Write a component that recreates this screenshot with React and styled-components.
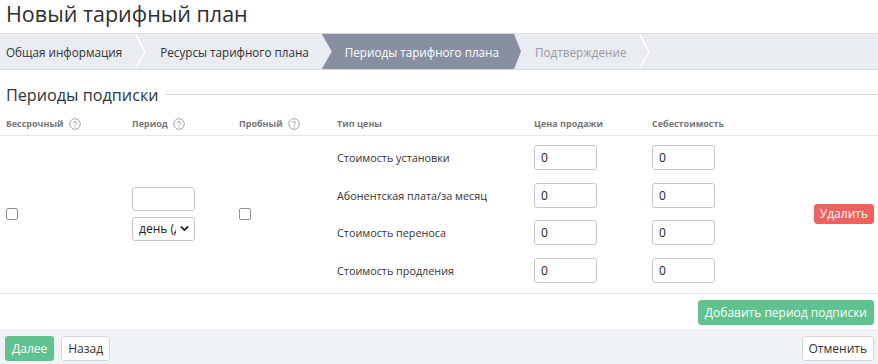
import React from 'react'
import styled, { createGlobalStyle } from 'styled-components'
import { ChevronDown } from 'lucide-react'

const GlobalStyle = createGlobalStyle`
  body {
    margin: 0;
    background: #fff;
    font-family: "Open Sans", "Liberation Sans", sans-serif;
    color: #333;
  }
`

const steps = [
  { title: 'Общая информация' },
  { title: 'Ресурсы тарифного плана' },
  { title: 'Периоды тарифного плана', active: true },
  { title: 'Подтверждение', disabled: true },
]

const prices = [
  'Стоимость установки',
  'Абонентская плата/за месяц',
  'Стоимость переноса',
  'Стоимость продления',
]

const HelpIcon = () => (
  <svg width="12" height="12" viewBox="0 0 12 12" fill="none" stroke="#a0a4aa" strokeWidth="1">
    <circle cx="6" cy="6" r="5.3" />
    <path d="M4.4 4.6a1.6 1.6 0 0 1 3.1.4c0 1.1-1.5 1.3-1.5 2.2" strokeLinecap="round" />
    <circle cx="6" cy="8.9" r="0.55" fill="#a0a4aa" stroke="none" />
  </svg>
)

const Separator = () => (
  <SepSvg width="11" height="35" viewBox="0 0 11 35">
    <polyline points="0.5,0 10,17.5 0.5,35" fill="none" stroke="#fff" strokeWidth="1.5" />
  </SepSvg>
)

const App = () => {
  return (
    <Page>
      <GlobalStyle />
      <Title>Новый тарифный план</Title>
      <Steps>
        {steps.map((s, i) => (
          <React.Fragment key={s.title}>
            <Step $active={s.active} $disabled={s.disabled} $first={i === 0}>{s.title}</Step>
            {!s.active && !(steps[i + 1] && steps[i + 1].active) && <Separator />}
          </React.Fragment>
        ))}
      </Steps>

      <Legend>
        <span>Периоды подписки</span>
        <LegendLine />
      </Legend>

      <HeadRow>
        <HeadCell>Бессрочный <HelpIcon /></HeadCell>
        <HeadCell>Период <HelpIcon /></HeadCell>
        <HeadCell>Пробный <HelpIcon /></HeadCell>
        <HeadCell>Тип цены</HeadCell>
        <HeadCell>Цена продажи</HeadCell>
        <HeadCell>Себестоимость</HeadCell>
        <HeadCell />
      </HeadRow>

      <Body>
        <SpanCell $col={1}>
          <Check type="checkbox" />
        </SpanCell>
        <SpanCell $col={2}>
          <PeriodBox>
            <Field $w={63} $h={24} />
            <SelectWrap>
              <Select defaultValue="day">
                <option value="day">день (дней)</option>
                <option value="month">месяц (месяцев)</option>
              </Select>
              <SelectArrow size={13} strokeWidth={3.2} />
            </SelectWrap>
          </PeriodBox>
        </SpanCell>
        <SpanCell $col={3}>
          <Check type="checkbox" />
        </SpanCell>
        {prices.map((p) => (
          <React.Fragment key={p}>
            <PriceLabel>{p}</PriceLabel>
            <InputCell><Field $w={63} $h={25} defaultValue="0" /></InputCell>
            <InputCell><Field $w={63} $h={25} defaultValue="0" /></InputCell>
          </React.Fragment>
        ))}
        <SpanCell $col={7} $right>
          <DangerButton>Удалить</DangerButton>
        </SpanCell>
      </Body>

      <AddRow>
        <Button $kind="green">Добавить период подписки</Button>
      </AddRow>

      <Footer>
        <Group>
          <Button $kind="green">Далее</Button>
          <Button>Назад</Button>
        </Group>
        <Button>Отменить</Button>
      </Footer>
    </Page>
  )
}

const Page = styled.div`
  width: 878px;
  height: 364px;
  overflow: hidden;
`

const Title = styled.h1`
  margin: 0;
  padding: 0 6px;
  height: 33px;
  font-size: 21.5px;
  font-weight: 400;
  line-height: 28px;
  color: #2e2e2e;
`

const Steps = styled.div`
  display: flex;
  align-items: stretch;
  height: 35px;
  background: #e9ecf0;
  border-top: 1px solid #d9dde3;
  border-bottom: 1px solid #d9dde3;
`

const Step = styled.div`
  display: flex;
  align-items: center;
  font-size: 11.7px;
  white-space: nowrap;
  padding: ${(p) => (p.$active ? '0 22px 0 23px' : p.$first ? '0 13px 0 6px' : '0 13px 0 14px')};
  color: ${(p) => (p.$active ? '#fff' : p.$disabled ? '#9a9a9a' : '#333')};
  background: ${(p) => (p.$active ? '#878fa0' : 'transparent')};
  clip-path: ${(p) =>
    p.$active
      ? 'polygon(0 0, calc(100% - 7px) 0, 100% 50%, calc(100% - 7px) 100%, 0 100%, 10px 50%)'
      : 'none'};
`

const SepSvg = styled.svg`
  flex: none;
  display: block;
`

const Legend = styled.div`
  display: flex;
  align-items: center;
  gap: 6px;
  box-sizing: border-box;
  padding: 13px 0 0 6px;
  height: 36px;
  font-size: 16.2px;
  line-height: 22px;
  color: #2d3642;
`

const LegendLine = styled.div`
  flex: 1;
  height: 1px;
  background: #d5dbe3;
`

const cols = '126px 107px 98px 197px 118px 1fr auto'

const HeadRow = styled.div`
  display: grid;
  grid-template-columns: ${cols};
  height: 30px;
  align-items: end;
  padding-bottom: 5px;
  box-sizing: border-box;
  border-bottom: 1px solid #e3e6ea;
`

const HeadCell = styled.div`
  display: flex;
  align-items: center;
  gap: 5px;
  padding-left: 6px;
  font-size: 9px;
  font-weight: 700;
  color: #777;
  white-space: nowrap;
`

const Body = styled.div`
  display: grid;
  grid-template-columns: ${cols};
  grid-template-rows: repeat(4, 25px);
  row-gap: 12.6px;
  padding: 9px 0 10px;
  border-bottom: 1px solid #e3e6ea;
`

const SpanCell = styled.div`
  grid-column: ${(p) => p.$col};
  grid-row: 1 / span 4;
  align-self: center;
  display: flex;
  justify-content: ${(p) => (p.$right ? 'flex-end' : 'flex-start')};
  padding: ${(p) => (p.$right ? '0 4px 0 0' : '0 0 0 6px')};
`

const Check = styled.input`
  margin: 0;
  width: 12px;
  height: 12px;
  appearance: none;
  border: 1px solid #8a8f96;
  border-radius: 2px;
  background: #fff;
`

const PeriodBox = styled.div`
  display: flex;
  flex-direction: column;
  gap: 5px;
`

const Field = styled.input`
  box-sizing: border-box;
  width: ${(p) => p.$w}px;
  height: ${(p) => p.$h}px;
  border: 1px solid #c3c8d0;
  border-radius: 3px;
  padding: 0 6px;
  font-family: "Open Sans", "Liberation Sans", sans-serif;
  font-size: 12px;
  color: #222;
  outline: none;
`

const SelectWrap = styled.div`
  position: relative;
  width: 63px;
  height: 24px;
`

const Select = styled.select`
  appearance: none;
  box-sizing: border-box;
  width: 100%;
  height: 100%;
  border: 1px solid #c3c8d0;
  border-radius: 3px;
  padding: 0 18px 0 6px;
  background: #fff;
  font-family: "Open Sans", "Liberation Sans", sans-serif;
  font-size: 12px;
  color: #222;
  outline: none;
`

const SelectArrow = styled(ChevronDown)`
  position: absolute;
  right: 4px;
  top: 6px;
  color: #222;
  pointer-events: none;
`

const PriceLabel = styled.div`
  grid-column: 4;
  display: flex;
  align-items: center;
  padding-left: 6px;
  font-size: 10.8px;
  color: #333;
  white-space: nowrap;
`

const InputCell = styled.div`
  display: flex;
  align-items: center;
  padding-left: 6px;
`

const Button = styled.button`
  box-sizing: border-box;
  height: 25px;
  padding: 0 6px;
  border-radius: 3px;
  font-family: "Open Sans", "Liberation Sans", sans-serif;
  font-size: 12px;
  cursor: pointer;
  border: 1px solid ${(p) => (p.$kind === 'green' ? '#60c28f' : '#d3d7dd')};
  background: ${(p) => (p.$kind === 'green' ? '#60c28f' : '#fff')};
  color: ${(p) => (p.$kind === 'green' ? '#fff' : '#333')};
`

const DangerButton = styled(Button)`
  height: 20px;
  padding: 0 5px;
  border-color: #f0605e;
  background: #f0605e;
  color: #fff;
`

const AddRow = styled.div`
  display: flex;
  justify-content: flex-end;
  padding: 6px 4px 0;
  height: 35px;
  box-sizing: border-box;
`

const Footer = styled.div`
  display: flex;
  justify-content: space-between;
  align-items: flex-start;
  padding: 7px 4px 0 5px;
  height: 35px;
  box-sizing: border-box;
  background: #f0f3f6;
`

const Group = styled.div`
  display: flex;
  gap: 7px;
`

export default App
